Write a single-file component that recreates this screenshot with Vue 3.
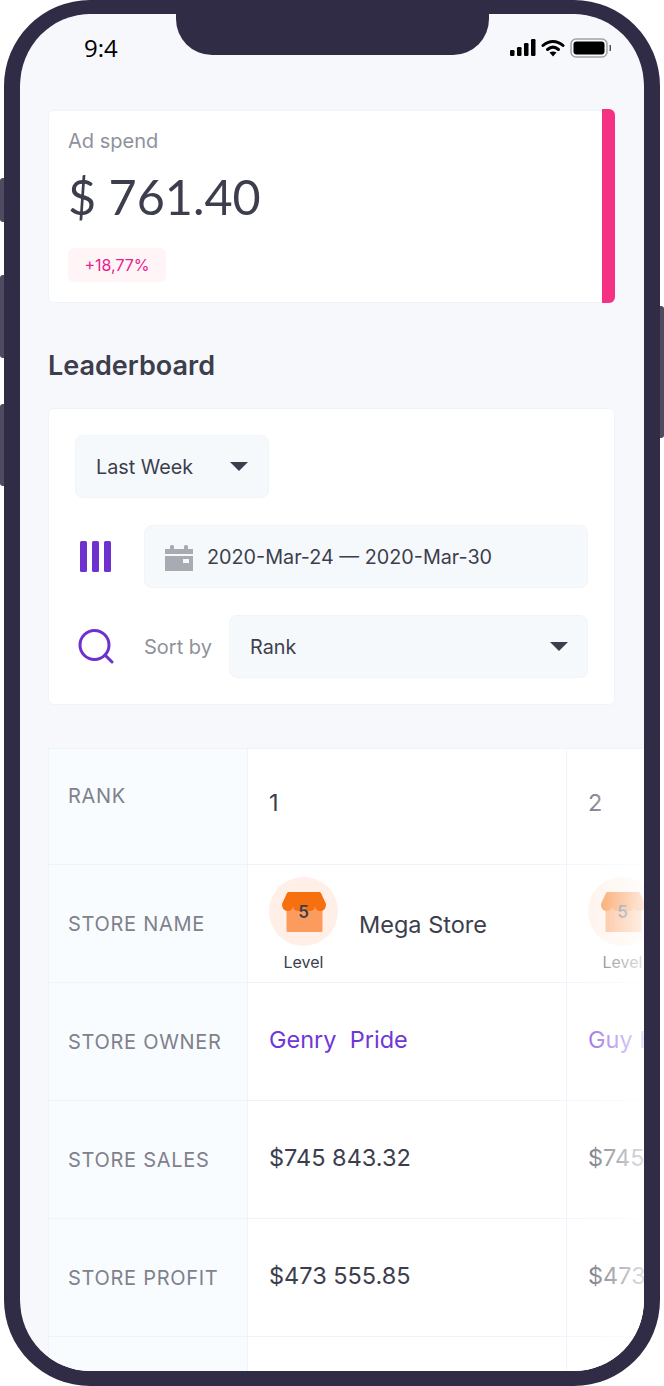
<script setup>
const rows = [
  { label: 'RANK', type: 'rank', values: ['1', '2'] },
  { label: 'STORE NAME', type: 'store', values: ['Mega Store', 'Mega Store'] },
  { label: 'STORE OWNER', type: 'owner', values: ['Genry  Pride', 'Guy Hawkins'] },
  { label: 'STORE SALES', type: 'money', values: ['$745 843.32', '$745 843.32'] },
  { label: 'STORE PROFIT', type: 'money', values: ['$473 555.85', '$473 555.85'] },
  { label: '', type: 'empty', values: ['', ''] }
]
</script>

<template>
  <div class="device">
    <i class="side-btn left b1"></i>
    <i class="side-btn left b2"></i>
    <i class="side-btn left b3"></i>
    <i class="side-btn right b4"></i>

    <div class="phone">
      <div class="notch"></div>
      <div class="screen">
        <div class="status-bar">
          <span class="time">9:4</span>
          <div class="status-icons">
            <svg width="26" height="17" viewBox="0 0 26 17">
              <rect x="0" y="11" width="4.500" height="6" rx="1.200" />
              <rect x="7" y="8" width="4.500" height="9" rx="1.200" />
              <rect x="14" y="4" width="4.500" height="13" rx="1.200" />
              <rect x="21" y="0" width="4.500" height="17" rx="1.200" />
            </svg>
            <svg class="wifi" width="24" height="18" viewBox="0 0 24 18">
              <path d="M2 6.500C8 1 16 1 22 6.500" fill="none" stroke="#000" stroke-width="3" stroke-linecap="round" />
              <path d="M6.500 10.500C10 7.500 14 7.500 17.500 10.500" fill="none" stroke="#000" stroke-width="3" stroke-linecap="round" />
              <path d="M8.500 13.500L12 17.500L15.500 13.500C13.500 12 10.500 12 8.500 13.500Z" />
            </svg>
            <svg width="41" height="20" viewBox="0 0 41 20">
              <rect x="1" y="1" width="36" height="18" rx="5" fill="none" stroke="#a3a3a3" stroke-width="1.500" />
              <rect x="3.500" y="3.500" width="31" height="13" rx="3" />
              <rect x="39.500" y="7" width="1.500" height="6" fill="#555" />
            </svg>
          </div>
        </div>

        <main class="content">
          <section class="card spend-card">
            <div class="spend-body">
              <div class="spend-label">Ad spend</div>
              <div class="spend-value">$ 761.40</div>
              <span class="spend-badge">+18,77%</span>
            </div>
            <div class="spend-bar"></div>
          </section>

          <h2 class="title">Leaderboard</h2>

          <section class="card filter-card">
            <div class="filter-row">
              <div class="field week-field">
                <span>Last Week</span>
                <i class="caret"></i>
              </div>
            </div>
            <div class="filter-row">
              <div class="icon-slot">
                <svg width="32" height="32" viewBox="0 0 32 32" fill="#6f31ce">
                  <rect x="0" y="0" width="7" height="31" rx="1.500" />
                  <rect x="12" y="0" width="7" height="31" rx="1.500" />
                  <rect x="24" y="0" width="7" height="31" rx="1.500" />
                </svg>
              </div>
              <div class="field date-field">
                <svg width="28" height="28" viewBox="0 0 28 28" fill="#a8abb2">
                  <path d="M0 6H5V3.500Q5 2 6.500 2H7.500Q9 2 9 3.500V6H19V3.500Q19 2 20.500 2H21.500Q23 2 23 3.500V6H28V11H0Z" />
                  <path d="M0 13H28V28H0ZM18 16V20H24V16Z" fill-rule="evenodd" />
                </svg>
                <span>2020-Mar-24 — 2020-Mar-30</span>
              </div>
            </div>
            <div class="filter-row">
              <div class="icon-slot search-slot">
                <svg width="36" height="36" viewBox="0 0 36 36" fill="none" stroke="#6f31ce" stroke-linecap="round">
                  <circle cx="16.500" cy="16" r="14.500" stroke-width="3" />
                  <path d="M27 26L34 33" stroke-width="3" />
                </svg>
              </div>
              <span class="sort-label">Sort by</span>
              <div class="field sort-field">
                <span>Rank</span>
                <i class="caret"></i>
              </div>
            </div>
          </section>

          <section class="board">
            <div v-for="row in rows" :key="row.label" class="board-row">
              <div class="cell head-cell" :class="'head-' + row.type">{{ row.label }}</div>
              <div v-for="(value, i) in row.values" :key="i" class="cell value-cell" :class="row.type">
                <template v-if="row.type === 'store'">
                  <div class="level">
                    <div class="level-circle">
                      <svg width="44" height="40" viewBox="0 0 44 40">
                        <rect x="4.500" y="8" width="36" height="32" rx="1.500" fill="#fb9c5e" />
                        <path d="M7 0H37Q38.500 0 39 1L44 12Q44 19 38.500 19Q33 19 33 13Q33 19 27.500 19Q22 19 22 13Q22 19 16.500 19Q11 19 11 13Q11 19 5.500 19Q0 19 0 12L5 1Q5.500 0 7 0Z" fill="#f7700f" />
                      </svg>
                      <span class="level-num">5</span>
                    </div>
                    <span class="level-text">Level</span>
                  </div>
                  <span class="store-name">{{ value }}</span>
                </template>
                <template v-else>{{ value }}</template>
              </div>
            </div>
            <div class="fade"></div>
          </section>
        </main>
      </div>
    </div>
  </div>
</template>

<style>
html, body {
  margin: 0;
  background: #fff;
}
</style>

<style scoped>
.device {
  position: relative;
  width: 664px;
  height: 1386px;
  padding: 0 4px;
  box-sizing: border-box;
  font-family: "Inter", "Noto Sans", sans-serif;
  color: #3c3e4d;
}

.side-btn {
  position: absolute;
  width: 4px;
  background: #4f4b60;
}
.side-btn.left { left: 0; border-radius: 3px 0 0 3px; }
.side-btn.right { right: 0; border-radius: 0 3px 3px 0; }
.b1 { top: 178px; height: 44px; }
.b2 { top: 275px; height: 83px; }
.b3 { top: 404px; height: 82px; }
.b4 { top: 306px; height: 132px; }

.phone {
  position: relative;
  height: 100%;
  box-sizing: border-box;
  border: solid #312c46;
  border-width: 14px 16px 15px;
  border-radius: 86px;
  overflow: hidden;
  background: #312c46;
}

.screen {
  height: 100%;
  background: #f6f8fc;
  border-radius: 68px;
  overflow: hidden;
}

/* 刘海 */
.notch {
  position: absolute;
  z-index: 3;
  top: -14px;
  left: 156px;
  width: 313px;
  height: 55px;
  background: #312c46;
  border-radius: 0 0 36px 36px;
}

.status-bar {
  display: flex;
  justify-content: space-between;
  align-items: center;
  height: 46px;
  padding: 21px 33px 0 64px;
  box-sizing: border-box;
}

.time {
  font-family: "Open Sans", sans-serif;
  font-size: 24px;
  color: #000;
}

.status-icons {
  display: flex;
  align-items: center;
  gap: 5px;
}

.content {
  padding: 50px 29px 0 28px;
}

.card {
  background: #fff;
  border: 1px solid #edf4fb;
  border-radius: 6px;
  box-sizing: border-box;
}

.spend-card {
  display: flex;
  justify-content: space-between;
  height: 193px;
}

.spend-body {
  padding: 17px 19px;
}

.spend-label {
  font-size: 20px;
  line-height: 26px;
  color: #8f919c;
}

.spend-value {
  margin-top: 11px;
  font-family: "Lato", sans-serif;
  font-size: 48.500px;
  line-height: 62px;
  color: #3c3e4d;
}

.spend-badge {
  display: block;
  width: 98px;
  height: 34px;
  margin-top: 21px;
  background: #fff5f7;
  border-radius: 6px;
  font-size: 16px;
  line-height: 34px;
  text-align: center;
  color: #e9218f;
}

.spend-bar {
  width: 13px;
  margin: -2px -1px -1px 0;
  background: #f53183;
  border-radius: 0 6px 6px 0;
}

.title {
  margin: 46px 0 25px;
  font-size: 27px;
  line-height: 34px;
  font-weight: 600;
  color: #3c3e4d;
}

.filter-card {
  display: flex;
  flex-direction: column;
  gap: 27px;
  height: 297px;
  padding: 26px;
}

.filter-row {
  display: flex;
  align-items: center;
  height: 63px;
}

.field {
  display: flex;
  align-items: center;
  height: 63px;
  box-sizing: border-box;
  background: #f5f9fc;
  border: 1px solid #f0f5f9;
  border-radius: 8px;
  font-size: 19.800px;
  color: #3c3e4d;
}

.week-field {
  width: 194px;
  padding: 0 20px;
  justify-content: space-between;
}

.date-field {
  flex: 1;
  gap: 14px;
  padding-left: 20px;
}

.icon-slot {
  display: flex;
  width: 69px;
  padding-left: 5px;
  box-sizing: border-box;
}

.search-slot {
  padding-left: 3px;
}

.sort-label {
  width: 85px;
  font-size: 20px;
  color: #8f919c;
}

.sort-field {
  flex: 1;
  padding: 0 19px 0 20px;
  justify-content: space-between;
}

.caret {
  width: 0;
  height: 0;
  border-style: solid;
  border-width: 9px 9px 0;
  border-color: #3c3e4d transparent transparent;
}

.board {
  position: relative;
  width: 596px;
  margin-top: 43px;
  overflow: hidden;
  border-top: 1px solid #edf4fb;
  border-left: 1px solid #edf4fb;
}

.board-row {
  display: grid;
  grid-template-columns: 199px 319px 319px;
  height: 118px;
  box-sizing: border-box;
  border-bottom: 1px solid #edf4fb;
}
.board-row:first-child {
  height: 116px;
}

.cell {
  display: flex;
  align-items: center;
  box-sizing: border-box;
  padding-left: 21px;
  border-right: 1px solid #edf4fb;
  background: #fff;
}

.head-cell {
  padding-left: 19px;
  background: #f9fcff;
  font-size: 20px;
  letter-spacing: 0.700px;
  color: #7f818c;
}

.head-rank {
  padding-bottom: 22px;
}

.value-cell {
  font-size: 23.500px;
  white-space: pre;
  padding-bottom: 4px;
}

.rank {
  padding-bottom: 9px;
}

.owner {
  color: #6f37d8;
}

.store {
  align-items: flex-start;
  gap: 21px;
  padding-top: 12px;
  padding-bottom: 0;
}

.level {
  display: flex;
  flex-direction: column;
  align-items: center;
  width: 69px;
}

.level-circle {
  position: relative;
  display: flex;
  align-items: center;
  justify-content: center;
  width: 69px;
  height: 69px;
  border-radius: 50%;
  background: #ffefe6;
}

.level-num {
  position: absolute;
  top: 25px;
  font-size: 17px;
  font-weight: 600;
  line-height: 20px;
}

.level-text {
  margin-top: 6px;
  font-size: 16px;
  line-height: 20px;
}

.store-name {
  margin-top: 33px;
}

.fade {
  position: absolute;
  top: 0;
  right: 0;
  bottom: 0;
  width: 78px;
  background: linear-gradient(to right, rgba(255, 255, 255, 0.15), rgba(255, 255, 255, 0.85));
  pointer-events: none;
}
</style>
